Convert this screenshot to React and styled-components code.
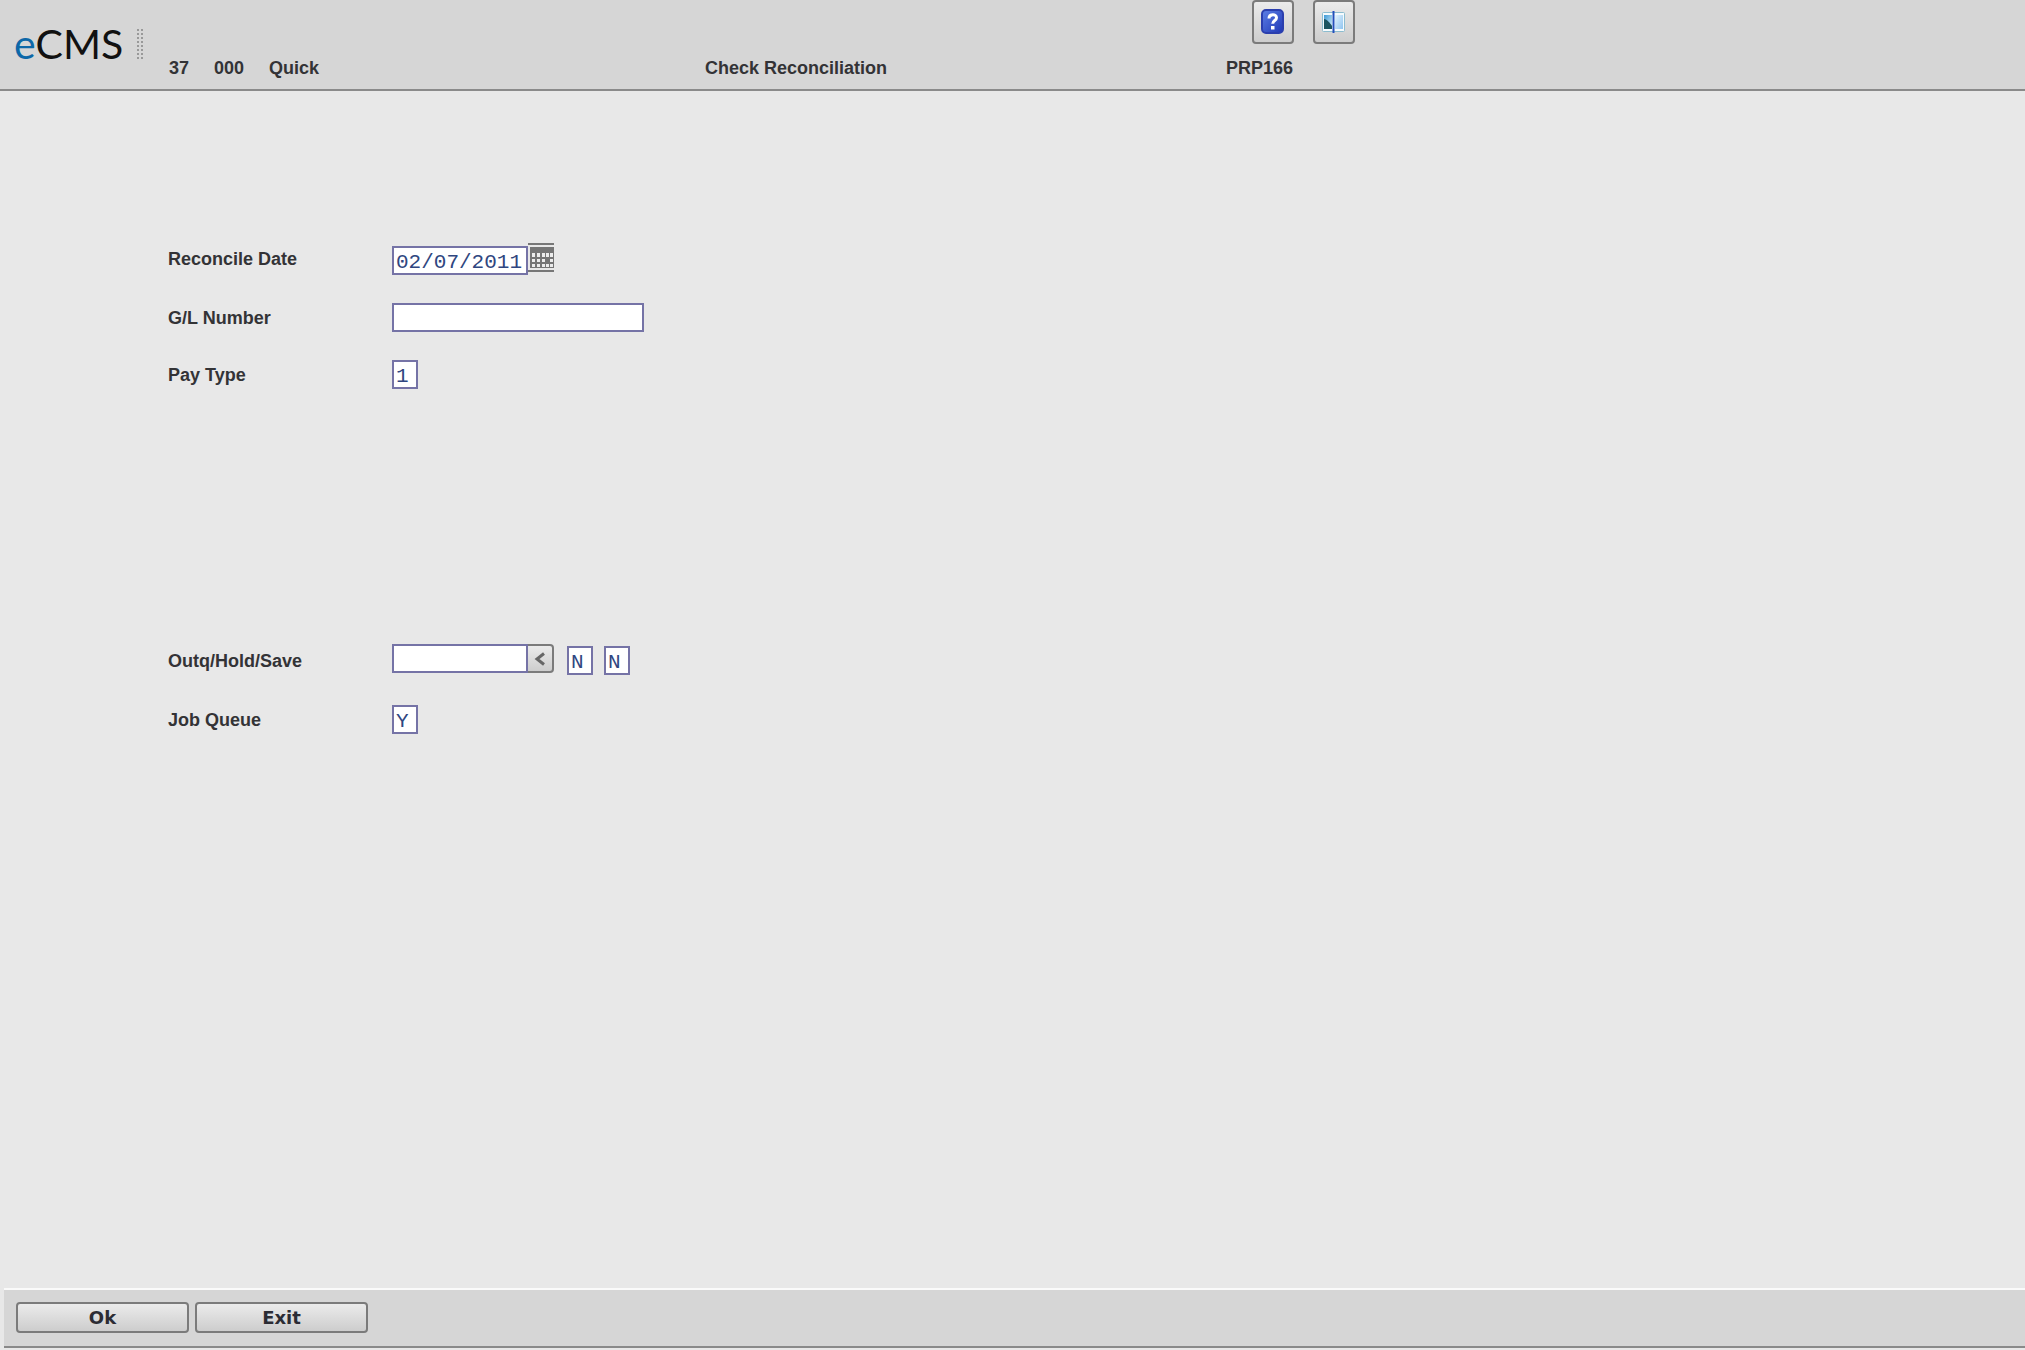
import React, { useState } from 'react'
import styled, { createGlobalStyle } from 'styled-components'

const GlobalStyle = createGlobalStyle`
  * {
    box-sizing: border-box;
  }
  body {
    margin: 0;
    background: #e8e8e8;
    color: #333336;
    font-family: "Liberation Sans", Arial, sans-serif;
    font-size: 18px;
    font-weight: bold;
    line-height: 24px;
  }
`

const Page = styled.form`
  display: flex;
  flex-direction: column;
  min-height: 100vh;
  padding-bottom: 2px;
`

const Header = styled.header`
  display: flex;
  background: #d6d6d6;
  border-bottom: 2px solid #8a8a8a;
`

const Brand = styled.div`
  display: flex;
  align-items: center;
  justify-content: space-between;
  width: 169px;
  padding: 0 26px 2px 14px;
`

const Logo = styled.div`
  font-family: Lato, sans-serif;
  font-size: 41px;
  font-weight: normal;
  line-height: 48px;
  color: #111;
  span {
    color: #0d68a8;
  }
`

const HeaderGrid = styled.div`
  flex: 1;
  display: grid;
  grid-template-columns: 536fr 521fr 799fr;
  grid-template-rows: 44px 24px;
  row-gap: 12px;
  padding-bottom: 9px;
`

const Toolbar = styled.div`
  grid-column: 3;
  display: flex;
  gap: 19px;
  padding-left: 26px;
`

const Company = styled.div`
  grid-column: 1;
  display: flex;
  gap: 25px;
`

const Title = styled.h1`
  margin: 0;
  font-size: 18px;
  line-height: 24px;
`

const Button = styled.button`
  display: flex;
  align-items: center;
  justify-content: center;
  padding: 0;
  border: 2px solid #7b7b7b;
  border-radius: 4px;
  background: linear-gradient(#ebebeb, #cdcdcd);
  color: #2c2c34;
`

const ToolButton = styled(Button)`
  width: 42px;
  height: 44px;
`

const FooterButton = styled(Button)`
  width: 173px;
  height: 31px;
  font-family: "DejaVu Sans", Verdana, sans-serif;
  font-size: 18px;
  font-weight: bold;
`

const Main = styled.main`
  flex: 1;
  display: flex;
  flex-direction: column;
  gap: 255px;
  padding: 152px 0 0 168px;
`

const Section = styled.section`
  display: flex;
  flex-direction: column;
  gap: ${(props) => props.$gap};
`

const Row = styled.div`
  display: flex;
  align-items: flex-end;
  height: ${(props) => props.$height || '29px'};
`

const Label = styled.label`
  align-self: ${(props) => props.$align || 'flex-end'};
  width: 224px;
  line-height: 28px;
`

const Input = styled.input`
  width: ${(props) => props.$width};
  height: 29px;
  padding: 3px 0 0 2px;
  border: 2px solid #7573a6;
  border-radius: 0;
  background: #fff;
  color: #2f4680;
  font-family: "Courier New", "Liberation Mono", monospace;
  font-size: 21px;
`

const Lookup = styled.div`
  display: flex;
  align-self: flex-start;
`

const LookupButton = styled(Button)`
  width: 26px;
  height: 29px;
  border-left: 0;
  border-radius: 0 4px 4px 0;
`

const Flags = styled.div`
  display: flex;
  gap: 11px;
  margin-left: 13px;
`

const IconButton = styled.button`
  display: flex;
  align-self: flex-start;
  padding: 0;
  border: 0;
  background: none;
`

const Footer = styled.footer`
  display: flex;
  gap: 6px;
  margin-left: 4px;
  padding: 12px 12px 13px;
  background: #d6d6d6;
  border-top: 2px solid #fafafa;
  border-bottom: 2px solid #8a8a8a;
`

const Grip = () => (
  <svg width="6" height="30" viewBox="0 0 6 30" aria-hidden="true">
    <path d="M1 0v30M5 0v30" stroke="#999" strokeWidth="2" strokeDasharray="2 2" />
  </svg>
)

const HelpIcon = () => (
  <svg width="24" height="26" viewBox="0 0 24 26" aria-hidden="true">
    <defs>
      <linearGradient id="help" x1="0" y1="0" x2="1" y2="1">
        <stop offset="0" stopColor="#5d80e6" />
        <stop offset="1" stopColor="#1f37b4" />
      </linearGradient>
    </defs>
    <rect x="1" y="1" width="21" height="23" rx="4" fill="url(#help)" stroke="#2b3fae" strokeWidth="2" />
    <path d="M8 9.500c0-5 7.500-5 7.500-.8 0 2.800-3.800 2.800-3.800 6" fill="none" stroke="#fff" strokeWidth="3" />
    <rect x="10" y="17" width="3.500" height="3.500" fill="#fff" />
  </svg>
)

const SplitIcon = () => (
  <svg width="24" height="22" viewBox="0 0 24 22" aria-hidden="true">
    <defs>
      <linearGradient id="sky" x1="0" y1="0" x2="1" y2="1">
        <stop offset="0" stopColor="#3f9bd8" />
        <stop offset="1" stopColor="#d8eef8" />
      </linearGradient>
      <linearGradient id="pane" x1="0" y1="0" x2="1" y2="1">
        <stop offset="0" stopColor="#e4f3fd" />
        <stop offset="1" stopColor="#8fc4f0" />
      </linearGradient>
    </defs>
    <rect x="0.500" y="1.500" width="22" height="19" rx="1" fill="#f6fbfd" stroke="#8cbccf" />
    <rect x="2" y="4" width="8" height="14" fill="url(#sky)" />
    <path d="M2 8c3 0 6 4 8 7v3H2z" fill="#1d5560" />
    <rect x="13" y="4" width="8" height="14" fill="url(#pane)" />
    <path d="M11.500 0v22" stroke="#2450bc" strokeWidth="2" />
  </svg>
)

const CalendarIcon = () => (
  <svg width="26" height="29" viewBox="0 0 26 29" aria-hidden="true">
    <path d="M0 1h26M0 28h26" stroke="#777" strokeWidth="2" />
    <path d="M2 4h24v21H2z" fill="#757575" />
    <path
      d="M4 10h3v4H4zM9 10h3v4H9zM14 10h3v4h-3zM18 10h3v4h-3zM22 10h3v4h-3zM4 16h3v3H4zM9 16h3v3H9zM14 16h3v3h-3zM22 16h3v3h-3zM4 21h3v3H4zM9 21h3v3H9zM14 21h3v3h-3zM18 21h3v3h-3zM22 21h3v3h-3z"
      fill="#ececec"
    />
  </svg>
)

const ChevronIcon = () => (
  <svg width="12" height="14" viewBox="0 0 12 14" aria-hidden="true">
    <path d="M10 1.500L3 7l7 5.500" fill="none" stroke="#666" strokeWidth="3" />
  </svg>
)

const App = () => {
  const [values, setValues] = useState({
    date: '02/07/2011',
    glNumber: '',
    payType: '1',
    outq: '',
    hold: 'N',
    save: 'N',
    jobQueue: 'Y',
  })

  const handleChange = (e) => {
    setValues({
      ...values,
      [e.target.name]: e.target.value,
    })
  }

  const field = (name) => ({ id: name, name, value: values[name], onChange: handleChange })

  return (
    <Page onSubmit={(e) => e.preventDefault()}>
      <GlobalStyle />
      <Header>
        <Brand>
          <Logo><span>e</span>CMS</Logo>
          <Grip />
        </Brand>
        <HeaderGrid>
          <Toolbar>
            <ToolButton type="button" aria-label="Help"><HelpIcon /></ToolButton>
            <ToolButton type="button" aria-label="Split view"><SplitIcon /></ToolButton>
          </Toolbar>
          <Company>
            <span>37</span>
            <span>000</span>
            <span>Quick</span>
          </Company>
          <Title>Check Reconciliation</Title>
          <span>PRP166</span>
        </HeaderGrid>
      </Header>

      <Main>
        <Section $gap="28px">
          <Row $height="32px">
            <Label htmlFor="date" $align="center">Reconcile Date</Label>
            <Input $width="136px" {...field('date')} />
            <IconButton type="button" aria-label="Pick a date"><CalendarIcon /></IconButton>
          </Row>
          <Row>
            <Label htmlFor="glNumber">G/L Number</Label>
            <Input $width="252px" {...field('glNumber')} />
          </Row>
          <Row>
            <Label htmlFor="payType">Pay Type</Label>
            <Input $width="26px" {...field('payType')} />
          </Row>
        </Section>

        <Section $gap="30px">
          <Row $height="31px">
            <Label htmlFor="outq">Outq/Hold/Save</Label>
            <Lookup>
              <Input $width="136px" {...field('outq')} />
              <LookupButton type="button" aria-label="Look up"><ChevronIcon /></LookupButton>
            </Lookup>
            <Flags>
              <Input $width="26px" aria-label="Hold" {...field('hold')} />
              <Input $width="26px" aria-label="Save" {...field('save')} />
            </Flags>
          </Row>
          <Row>
            <Label htmlFor="jobQueue">Job Queue</Label>
            <Input $width="26px" {...field('jobQueue')} />
          </Row>
        </Section>
      </Main>

      <Footer>
        <FooterButton type="submit">Ok</FooterButton>
        <FooterButton type="button">Exit</FooterButton>
      </Footer>
    </Page>
  )
}

export default App
